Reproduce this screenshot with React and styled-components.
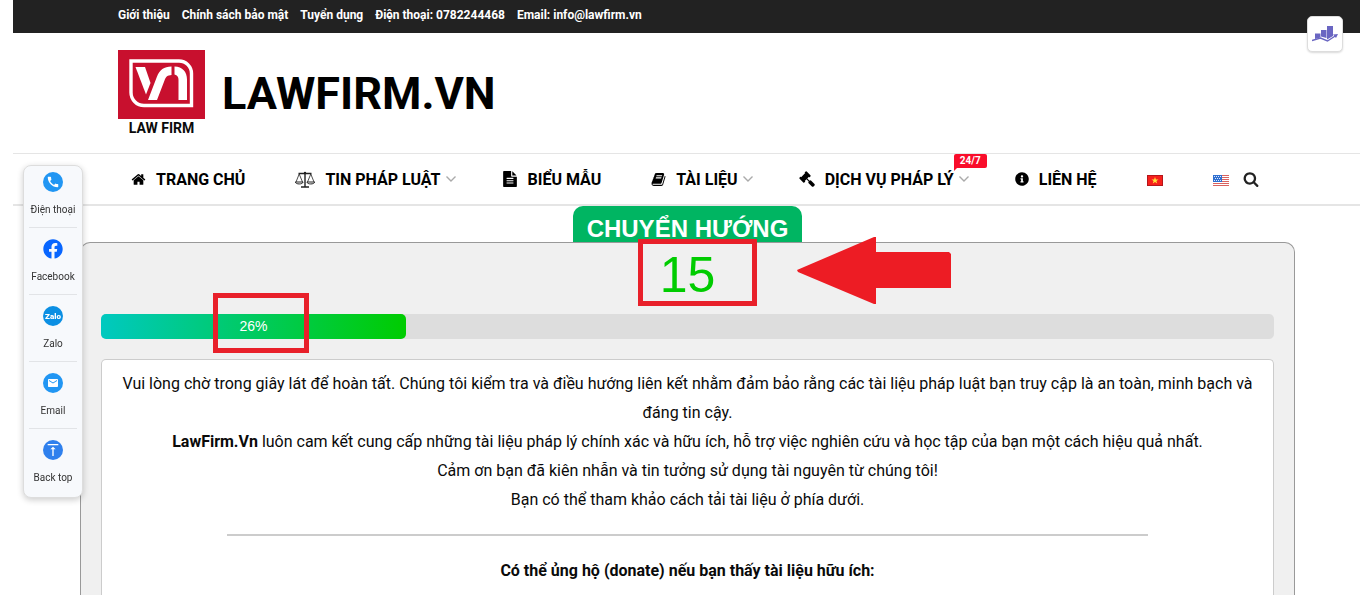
import React from "react";
import styled, { createGlobalStyle } from "styled-components";
import { FaFacebook, FaInfoCircle } from "react-icons/fa";
import { MdCall, MdEmail, MdVerticalAlignTop } from "react-icons/md";

const GlobalStyle = createGlobalStyle`
  * {
    box-sizing: border-box;
  }
  body {
    margin: 0;
    background: #fff;
    color: #0a0a0a;
    font-family: Roboto, "Liberation Sans", sans-serif;
    font-size: 16px;
  }
  a {
    color: inherit;
    text-decoration: none;
  }
`;

// Layout
const Page = styled.div`
  display: flex;
  flex-direction: column;
  height: calc(100vh - 3px);
  margin: 0 6px 3px 13px;
  overflow: hidden;
`;
const Container = styled.div`
  display: flex;
  align-items: center;
  width: 100%;
  max-width: 1141px;
  margin: 0 auto;
  padding-left: 2px;
`;

// Top bar
const TopBar = styled.div`
  flex: none;
  background: #222;
  color: #fff;
`;
const TopLinks = styled(Container)`
  gap: 12px;
  height: 33px;
  padding-bottom: 4px;
  font-size: 12px;
  font-weight: 700;
`;

// Header
const Header = styled.header`
  flex: none;
`;
const Brand = styled(Container)`
  gap: 17px;
  height: 120px;
  padding-top: 1px;
`;
const LogoLink = styled.a`
  display: flex;
  flex-direction: column;
  align-items: center;
  font-size: 14px;
  font-weight: 700;
  line-height: 18px;
  svg {
    display: block;
  }
`;
const SiteName = styled.div`
  font-size: 45px;
  font-weight: 700;
  line-height: 60px;
  color: #000;
`;

// Navigation
const Nav = styled.nav`
  border-top: 1px solid #e5e5e5;
  border-bottom: 2px solid #e5e5e5;
`;
const NavRow = styled(Container)`
  gap: 50px;
  height: 50px;
  padding-left: 15px;
`;
const NavLink = styled.a`
  position: relative;
  display: flex;
  align-items: center;
  gap: 10px;
  font-size: 16px;
  font-weight: 700;
  white-space: nowrap;
  color: #000;
  svg {
    display: block;
    flex: none;
  }
`;
const Chevron = styled.svg`
  width: 10px;
  height: 6px;
  margin: 0 -4px 0 -5px;
  fill: none;
  stroke: #aaa;
  stroke-width: 1.4;
`;
const Badge = styled.span`
  position: absolute;
  top: -16px;
  right: -22px;
  padding: 0 6px;
  border-radius: 2px 2px 2px 0;
  background: #f90d2b;
  color: #fff;
  font-size: 10px;
  line-height: 14px;
  &:after {
    content: "";
    position: absolute;
    left: 0;
    top: 100%;
    border-top: 3px solid #f90d2b;
    border-right: 3px solid transparent;
  }
`;
const Languages = styled.div`
  display: flex;
  align-items: center;
  gap: 50px;
  padding-top: 2px;
  a {
    display: block;
  }
  svg {
    display: block;
  }
`;
const SearchButton = styled.button`
  margin-left: -36px;
  padding: 0;
  border: 0;
  background: none;
  color: #222;
  svg {
    display: block;
  }
`;

// Redirect panel
const Main = styled.main`
  display: flex;
  flex: 1;
  flex-direction: column;
  align-items: center;
  padding-left: 2px;
`;
const Title = styled.h1`
  margin: 0;
  padding: 10px 14px 0;
  border-radius: 10px 10px 0 0;
  background: #00b562;
  color: #fff;
  font-family: "Liberation Sans", Arial, sans-serif;
  font-size: 24px;
  font-weight: 700;
  line-height: 26px;
`;
const Panel = styled.section`
  display: flex;
  flex: 1;
  flex-direction: column;
  width: 100%;
  max-width: 1215px;
  padding: 0 20px;
  border: 1px solid #999;
  border-bottom: 0;
  border-radius: 10px 10px 0 0;
  background: #f0f0f0;
`;
const Countdown = styled.div`
  position: relative;
  align-self: center;
  margin-bottom: 7px;
  color: #00cc00;
  font-family: "Liberation Sans", Arial, sans-serif;
  font-size: 50px;
  line-height: 64px;
`;
const Progress = styled.div`
  height: 25px;
  margin-bottom: 20px;
  border-radius: 5px;
  background: #ddd;
`;
const ProgressFill = styled.div`
  position: relative;
  height: 100%;
  border-radius: 5px;
  background: linear-gradient(to right, #00c9c0, #00cc00);
  color: #fff;
  font-family: "Liberation Sans", Arial, sans-serif;
  font-size: 14px;
  line-height: 25px;
  text-align: center;
`;
const Card = styled.div`
  flex: 1;
  padding: 9px 10px;
  border: 1px solid #ccc;
  border-bottom: 0;
  border-radius: 5px 5px 0 0;
  background: #fff;
  line-height: 29px;
  text-align: center;
  p {
    margin: 0;
  }
`;
const Divider = styled.hr`
  width: 80%;
  height: 2px;
  margin: 20px auto;
  border: 0;
  background: #ccc;
`;

// Red marks over the panel
const Mark = styled.span`
  position: absolute;
  top: ${(props) => props.$top};
  left: 50%;
  width: ${(props) => props.$width};
  height: ${(props) => props.$height};
  margin-left: ${(props) => props.$shift};
  border: 5px solid #e8202a;
`;
const Arrow = styled.svg`
  position: absolute;
  top: -6px;
  left: 137px;
  fill: #ed1c24;
`;

// Floating widgets
const ContactBar = styled.aside`
  position: fixed;
  top: 165px;
  left: 23px;
  width: 60px;
  padding: 0 5px 2px;
  border: 1px solid #ddd;
  border-radius: 8px;
  background: #f7f9fc;
  box-shadow: 0 2px 6px rgba(0, 0, 0, 0.2);
`;
const ContactLink = styled.a`
  display: flex;
  flex-direction: column;
  align-items: center;
  gap: 10px;
  padding: 11px 0 10px;
  border-bottom: 1px solid #e2e4e7;
  color: #333;
  font-size: 10px;
  line-height: 15px;
  white-space: nowrap;
  &:first-child {
    padding-top: 6px;
  }
  &:last-child {
    border-bottom: 0;
  }
`;
const Round = styled.span`
  display: flex;
  align-items: center;
  justify-content: center;
  width: 20px;
  height: 20px;
  border-radius: 50%;
  background: ${(props) => props.$color};
  color: #fff;
`;
const StatsButton = styled.button`
  position: fixed;
  top: 16px;
  right: 23px;
  display: flex;
  align-items: center;
  justify-content: center;
  width: 36px;
  height: 36px;
  padding: 0;
  border: 1px solid #ddd;
  border-radius: 5px;
  background: #fff;
  box-shadow: 0 1px 2px rgba(0, 0, 0, 0.15);
`;

const glyphs = {
  home: "M1472 992v480q0 26-19 45t-45 19h-384v-384h-256v384h-384q-26 0-45-19t-19-45v-480q0-1 .5-3t.5-3l575-474 575 474q1 2 1 6zm223-69l-62 74q-8 9-21 11h-3q-13 0-21-7l-692-577-692 577q-12 8-24 7-13-2-21-11l-62-74q-8-10-7-23.5t11-21.5l719-599q32-26 76-26t76 26l244 204v-195q0-14 9-23t23-9h192q14 0 23 9t9 23v408l219 182q10 8 11 21.5t-7 23.5z",
  file: "M1596 476q14 14 28 36h-472v-472q22 14 36 28zm-476 164h544v1056q0 40-28 68t-68 28h-1344q-40 0-68-28t-28-68v-1600q0-40 28-68t68-28h800v544q0 40 28 68t68 28zm160 736v-64q0-14-9-23t-23-9h-704q-14 0-23 9t-9 23v64q0 14 9 23t23 9h704q14 0 23-9t9-23zm0-256v-64q0-14-9-23t-23-9h-704q-14 0-23 9t-9 23v64q0 14 9 23t23 9h704q14 0 23-9t9-23zm0-256v-64q0-14-9-23t-23-9h-704q-14 0-23 9t-9 23v64q0 14 9 23t23 9h704q14 0 23-9t9-23z",
  book: "M1703 478q40 57 18 129l-275 906q-19 64-76.5 107.5t-122.5 43.5h-923q-77 0-148.5-53.5t-99.5-131.5q-24-67-2-127 0-4 3-27t4-37q1-8-3-21.5t-3-19.5q2-11 8-21t16.5-23.5 16.5-23.5q23-38 45-91.5t30-91.5q3-10 .5-30t-.5-28q3-11 17-28t17-23q21-36 42-92t25-90q1-9-2.5-32t.5-28q4-13 22-30.5t22-22.5q19-26 42.5-84.5t27.5-96.5q1-8-3-25.5t-2-26.5q2-8 9-18t18-23 17-21q8-12 16.5-30.5t15-35 16-36 19.5-32 26.5-23.5 36-11.5 47.5 5.5l-1 3q38-9 51-9h761q74 0 114 56t18 130l-274 906q-36 119-71.5 153.5t-128.5 34.5h-869q-27 0-38 15-11 16-1 43 24 70 144 70h923q29 0 56-15.5t35-41.5l300-987q7-22 5-57 38 15 59 43zm-1064 2q-4 13 2 22.5t20 9.5h608q13 0 25.5-9.5t16.5-22.5l21-64q4-13-2-22.5t-20-9.5h-608q-13 0-25.5 9.5t-16.5 22.5zm-83 256q-4 13 2 22.5t20 9.5h608q13 0 25.5-9.5t16.5-22.5l21-64q4-13-2-22.5t-20-9.5h-608q-13 0-25.5 9.5t-16.5 22.5z",
  gavel: "M1771 1536q0 53-37 90l-107 108q-39 37-91 37-53 0-90-37l-363-364q-38-36-38-90 0-53 43-96l-256-256-126 126q-14 14-34 14t-34-14q2 2 12.5 12t12.5 13 10 11.5 10 13.5 6 13.5 5.5 16.5 1.5 18q0 38-28 68-3 3-16.5 18t-19 20.5-18.5 16.5-22 15.5-22 9-26 4.5q-40 0-68-28l-408-408q-28-28-28-68 0-13 4.5-26t9-22 15.5-22 16.5-18.5 20.5-19 18-16.5q30-28 68-28 10 0 18 1.5t16.5 5.5 13.5 6 13.5 10 11.5 10 13 12.5 12 12.5q-14-14-14-34t14-34l348-348q14-14 34-14t34 14q-2-2-12.5-12t-12.5-13-10-11.5-10-13.5-6-13.5-5.5-16.5-1.5-18q0-38 28-68 3-3 16.5-18t19-20.5 18.5-16.5 22-15.5 22-9 26-4.5q40 0 68 28l408 408q28 28 28 68 0 13-4.5 26t-9 22-15.5 22-16.5 18.5-20.5 19-18 16.5q-30 28-68 28-10 0-18-1.5t-16.5-5.5-13.5-6-13.5-10-11.5-10-13-12.5-12-12.5q14 14 14 34t-14 34l-126 126 256 256q43-43 96-43 52 0 91 37l363 363q37 39 37 91z",
  search: "M1216 832q0-185-131.5-316.5t-316.5-131.5-316.5 131.5-131.5 316.5 131.5 316.5 316.5 131.5 316.5-131.5 131.5-316.5zm512 832q0 52-38 90t-90 38q-54 0-90-38l-343-342q-179 124-399 124-143 0-273.5-55.5t-225-150-150-225-55.5-273.5 55.5-273.5 150-225 225-150 273.5-55.5 273.5 55.5 225 150 150 225 55.5 273.5q0 220-124 399l343 343q37 37 37 90z",
};

const Glyph = ({ name, size = 16 }) => (
  <svg width={size} height={size} viewBox="0 0 1792 1792" fill="currentColor" aria-hidden="true">
    <path d={glyphs[name]} />
  </svg>
);

const ScaleIcon = () => (
  <svg width="20" height="17" viewBox="0 0 20 17" fill="none" stroke="#222" aria-hidden="true">
    <path d="M3.5 2.5h13M10 1v14.5M6 16h8" strokeWidth="1.4" />
    <circle cx="10" cy="2" r="1.2" fill="#222" stroke="none" />
    <path d="M4.2 3L1 11M4.2 3l3.3 8M15.8 3l-3.3 8M15.8 3L19 11" strokeWidth="0.8" />
    <path d="M.3 11h7.8c-.4 2.600-7.400 2.600-7.800 0zM11.900 11h7.800c-.4 2.600-7.400 2.600-7.800 0z" />
  </svg>
);

const Logo = () => (
  <svg width="87" height="69" viewBox="0 0 87 69" aria-hidden="true">
    <path fill="#c8102e" d="M0 0h87v69H0z" />
    <path
      d="M13 11h48a12.500 12.500 0 0 1 12.500 12.500v32H26a13 13 0 0 1-13-13z"
      fill="none"
      stroke="#fff"
      strokeWidth="3.400"
    />
    <path fill="#fff" d="M17.500 17h9.500l5.500 16-4.500 11.500z" />
    <path fill="#fff" d="M30 50l9-23.500c2.500-6.500 7-10 14.500-10v8.500c-4 .2-5.500 1.500-7 5.500L39 50z" />
    <path fill="#fff" d="M56.500 16.500C64.500 17 69 21.500 69 29.500V50h-8.500V30c0-3-1-4.800-4-5.500z" />
  </svg>
);

const VietnamFlag = () => (
  <svg width="16" height="11" viewBox="0 0 16 11" aria-hidden="true">
    <path fill="#b5161b" d="M0 0h16v11H0z" />
    <path fill="#f6201c" d="M1 1h14v9H1z" />
    <path fill="#ffe23a" d="M8 2l.9 2.500h2.600L9.400 6.100l.8 2.500L8 7.100 5.800 8.600l.8-2.500-2.100-1.600h2.600z" />
  </svg>
);

const UsFlag = () => (
  <svg width="16" height="11" viewBox="0 0 16 11" aria-hidden="true">
    <path fill="#fff" d="M0 0h16v11H0z" />
    <path stroke="#d9625f" d="M0 .5h16M0 2.500h16M0 4.500h16M0 6.500h16M0 8.500h16M0 10.500h16" />
    <path fill="#2f6fd0" d="M0 0h9v7H0z" />
    <path
      stroke="#dce8fb"
      strokeDasharray="1 1"
      d="M1 1.500h7M2 3.500h6M1 5.500h7"
    />
  </svg>
);

const StatsIcon = () => (
  <svg width="26" height="18" viewBox="0 0 26 18" aria-hidden="true">
    <path fill="#6a66c2" d="M3 8.500h5.500v4L3 14zM9 5h5.500v8L9 11.500zM15 1h6v10l-6 3.500z" />
    <path fill="none" stroke="#6a66c2" strokeWidth="1.400" d="M0 15.500l8.500-2.500 7 3L24 10.500" />
    <path fill="#6a66c2" d="M21 9.500l5-.5-2 4z" />
  </svg>
);

const topLinks = [
  "Giới thiệu",
  "Chính sách bảo mật",
  "Tuyển dụng",
  "Điện thoại: 0782244468",
  "Email: info@lawfirm.vn",
];

const menu = [
  { label: "TRANG CHỦ", icon: <Glyph name="home" size={15} /> },
  { label: "TIN PHÁP LUẬT", icon: <ScaleIcon />, sub: true },
  { label: "BIỂU MẪU", icon: <Glyph name="file" /> },
  { label: "TÀI LIỆU", icon: <Glyph name="book" size={15} />, sub: true },
  { label: "DỊCH VỤ PHÁP LÝ", icon: <Glyph name="gavel" />, sub: true, badge: "24/7" },
  { label: "LIÊN HỆ", icon: <FaInfoCircle size={14} /> },
];

const ZaloIcon = () => (
  <svg width="20" height="20" viewBox="0 0 20 20" aria-hidden="true">
    <circle cx="10" cy="10" r="10" fill="#0b8fe3" />
    <text x="10" y="13" fill="#fff" fontSize="8" fontWeight="900" textAnchor="middle">
      Zalo
    </text>
  </svg>
);

const contacts = [
  { label: "Điện thoại", icon: <Round $color="#2196f3"><MdCall size={14} /></Round> },
  { label: "Facebook", icon: <FaFacebook size={20} color="#0866ff" /> },
  { label: "Zalo", icon: <ZaloIcon /> },
  { label: "Email", icon: <Round $color="#2196f3"><MdEmail size={12} /></Round> },
  { label: "Back top", icon: <Round $color="#2f80ed"><MdVerticalAlignTop size={16} /></Round> },
];

const percent = 26;

export default function App() {
  return (
    <React.Fragment>
      <GlobalStyle />
      <Page>
        <TopBar>
          <TopLinks>
            {topLinks.map((text) => (
              <a href="#" key={text}>{text}</a>
            ))}
          </TopLinks>
        </TopBar>
        <Header>
          <Brand>
            <LogoLink href="#">
              <Logo />
              LAW FIRM
            </LogoLink>
            <SiteName>LAWFIRM.VN</SiteName>
          </Brand>
          <Nav>
            <NavRow>
              {menu.map((item) => (
                <NavLink href="#" key={item.label}>
                  {item.icon}
                  {item.label}
                  {item.sub && (
                    <Chevron viewBox="0 0 10 6"><path d="M.5 .5L5 5 9.500 .5" /></Chevron>
                  )}
                  {item.badge && <Badge>{item.badge}</Badge>}
                </NavLink>
              ))}
              <Languages>
                <a href="#" aria-label="Tiếng Việt"><VietnamFlag /></a>
                <a href="#" aria-label="English"><UsFlag /></a>
              </Languages>
              <SearchButton aria-label="Tìm kiếm"><Glyph name="search" /></SearchButton>
            </NavRow>
          </Nav>
        </Header>
        <Main>
          <Title>CHUYỂN HƯỚNG</Title>
          <Panel>
            <Countdown>
              15
              <Mark $top="-4px" $width="119px" $height="67px" $shift="-50px" />
              <Arrow width="154" height="67" viewBox="0 0 154 67">
                <path d="M0 33L77 0h2v15h73l2 2v34H79v16h-2L1 35z" />
              </Arrow>
            </Countdown>
            <Progress role="progressbar" aria-label="Tiến trình" aria-valuenow={percent}>
              <ProgressFill style={{ width: percent + "%" }}>
                {percent}%
                <Mark $top="-21px" $width="96px" $height="60px" $shift="-40px" />
              </ProgressFill>
            </Progress>
            <Card>
              <p>
                Vui lòng chờ trong giây lát để hoàn tất. Chúng tôi kiểm tra và điều hướng liên kết
                nhằm đảm bảo rằng các tài liệu pháp luật bạn truy cập là an toàn, minh bạch và đáng
                tin cậy.
              </p>
              <p>
                <b>LawFirm.Vn</b> luôn cam kết cung cấp những tài liệu pháp lý chính xác và hữu ích,
                hỗ trợ việc nghiên cứu và học tập của bạn một cách hiệu quả nhất.
              </p>
              <p>Cảm ơn bạn đã kiên nhẫn và tin tưởng sử dụng tài nguyên từ chúng tôi!</p>
              <p>Bạn có thể tham khảo cách tải tài liệu ở phía dưới.</p>
              <Divider />
              <p><b>Có thể ủng hộ (donate) nếu bạn thấy tài liệu hữu ích:</b></p>
            </Card>
          </Panel>
        </Main>
      </Page>
      <ContactBar>
        {contacts.map((item) => (
          <ContactLink href="#" key={item.label}>
            {item.icon}
            {item.label}
          </ContactLink>
        ))}
      </ContactBar>
      <StatsButton aria-label="Thống kê"><StatsIcon /></StatsButton>
    </React.Fragment>
  );
}
